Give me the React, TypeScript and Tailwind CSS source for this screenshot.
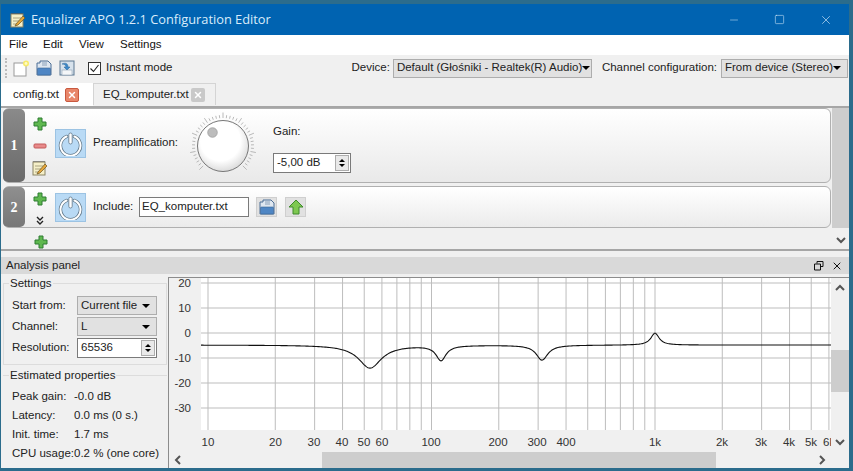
import { Minus, Square, X } from "lucide-react";

const font = "font-['Liberation_Sans',Arial,sans-serif]";

function Plus({ className = "" }: { className?: string }) {
  return (
    <svg width="14" height="14" viewBox="0 0 14 14" className={className}>
      <path d="M5 1h4v4h4v4H9v4H5V9H1V5h4z" fill="#5fb84f" stroke="#2f7d32" strokeWidth="1" />
    </svg>
  );
}

function MinusIcon() {
  return (
    <svg width="14" height="14" viewBox="0 0 14 14">
      <rect x="1" y="5" width="12" height="4" rx="1" fill="#e88a8a" stroke="#c25b5b" />
    </svg>
  );
}

function Notepad() {
  return (
    <svg width="16" height="16" viewBox="0 0 16 16">
      <rect x="1" y="2" width="12" height="13" fill="#f5efc8" stroke="#8a8464" />
      <path d="M2 2v-1M4 2v-1M6 2v-1M8 2v-1M10 2v-1M12 2v-1" stroke="#555" strokeWidth="1" />
      <path d="M3 6h8M3 9h6M3 12h4" stroke="#a9a380" />
      <path d="M6 12l7-8 2 2-7 7-3 1z" fill="#e6a73a" stroke="#6b5320" strokeWidth="0.7" />
    </svg>
  );
}

function Power() {
  return (
    <div className="w-[31px] h-[29px] shrink-0 bg-[#b9daf5] border border-[#9cc3e3] flex items-center justify-center">
      <svg width="25" height="25" viewBox="0 0 25 25" fill="none">
        <path d="M8.5 5.5a10 10 0 1 0 8 0" stroke="#5f7484" strokeWidth="3.4" strokeLinecap="round" />
        <path d="M8.5 5.5a10 10 0 1 0 8 0" stroke="#fff" strokeWidth="2" strokeLinecap="round" />
        <rect x="10.8" y="2" width="3.4" height="11" rx="1.7" fill="#fff" stroke="#5f7484" strokeWidth="0.8" />
      </svg>
    </div>
  );
}

function Floppy({ size = 16 }: { size?: number }) {
  return (
    <svg width={size} height={size} viewBox="0 0 16 16">
      <path d="M1 3h3V1h8l3 3v11H1z" fill="#dfe7f0" stroke="#4d6f96" />
      <rect x="1.5" y="8" width="13" height="7" rx="1" fill="#4f86c4" stroke="#3a6496" strokeWidth="0.6" />
      <path d="M6 3h5M6 5h5" stroke="#8aa0b8" />
    </svg>
  );
}

function SaveAs() {
  return (
    <svg width="16" height="16" viewBox="0 0 16 16">
      <rect x="1" y="1" width="14" height="14" fill="#d7e2ec" stroke="#5a7791" />
      <rect x="3" y="10" width="10" height="5" fill="#f4f6f8" stroke="#8fa3b5" strokeWidth="0.6" />
      <path d="M3 4c4-2 6 0 6 3h2l-3 3-3-3h2c0-2-2-3-4-3z" fill="#3d89c9" stroke="#2b6598" strokeWidth="0.5" />
    </svg>
  );
}

function NewDoc() {
  return (
    <svg width="17" height="17" viewBox="0 0 17 17">
      <rect x="1" y="3" width="12" height="13" fill="#fff" stroke="#9a9a9a" />
      <circle cx="13" cy="3.5" r="3" fill="#f7ea6a" />
      <circle cx="13" cy="3.5" r="1.4" fill="#fffbc4" />
    </svg>
  );
}

function Caret() {
  return <span className="w-0 h-0 border-x-[4px] border-x-transparent border-t-[4px] border-t-black shrink-0" />;
}

function Combo({ label, className = "" }: { label: string; className?: string }) {
  return (
    <div className={`h-[19px] bg-[#e1e1e1] border border-[#adadad] flex items-center justify-between pl-[3px] pr-[6px] ${className}`}>
      <span className="whitespace-nowrap">{label}</span>
      <Caret />
    </div>
  );
}

function Spin({ value, className = "" }: { value: string; className?: string }) {
  return (
    <div className={`h-[20px] bg-white border border-[#7a7a7a] flex items-center justify-between pl-[3px] pr-[1px] ${className}`}>
      <span>{value}</span>
      <div className="w-[14px] h-[16px] border border-[#adadad] bg-[#e9e9e9] flex flex-col items-center justify-center gap-[2px]">
        <span className="w-0 h-0 border-x-[3px] border-x-transparent border-b-[3px] border-b-black" />
        <span className="w-0 h-0 border-x-[3px] border-x-transparent border-t-[3px] border-t-black" />
      </div>
    </div>
  );
}

function Chevron({ dir }: { dir: "up" | "down" | "left" | "right" }) {
  const d = {
    up: "M2 8l4-4 4 4",
    down: "M2 4l4 4 4-4",
    left: "M8 2L4 6l4 4",
    right: "M4 2l4 4-4 4",
  }[dir];
  return (
    <svg width="12" height="12" viewBox="0 0 12 12" fill="none">
      <path d={d} stroke="#555" strokeWidth="2" />
    </svg>
  );
}

function Knob() {
  const ticks = Array.from({ length: 41 }, (_, i) => -225 + (i * 270) / 40);
  return (
    <svg width="68" height="68" viewBox="-34 -34 68 68" className="shrink-0">
      <defs>
        <radialGradient id="knob" cx="0.45" cy="0.4" r="0.65">
          <stop offset="0.6" stopColor="#ffffff" />
          <stop offset="1" stopColor="#d4d4d4" />
        </radialGradient>
      </defs>
      {ticks.map((a) => {
        const r = (a * Math.PI) / 180;
        const major = Math.round((a + 225) / 6.75) % 5 === 0;
        return (
          <line
            key={a}
            x1={Math.cos(r) * 28}
            y1={Math.sin(r) * 28}
            x2={Math.cos(r) * (major ? 33.5 : 31)}
            y2={Math.sin(r) * (major ? 33.5 : 31)}
            stroke="#a8a8a8"
            strokeWidth="0.8"
          />
        );
      })}
      <circle r="25.5" fill="url(#knob)" stroke="#777" strokeWidth="1" />
      <circle cx="-10.5" cy="-13.5" r="4.8" fill="#bcbcbc" stroke="#999" strokeWidth="0.7" />
    </svg>
  );
}

function Handle({ n, className = "" }: { n: number; className?: string }) {
  return (
    <div className={`w-[22px] shrink-0 rounded-[5px] flex items-center justify-center text-white font-bold text-[14px] font-['Liberation_Serif',serif] ${className}`}>
      {n}
    </div>
  );
}

const freqs = [10, 20, 30, 40, 50, 60, 70, 80, 90, 100, 200, 300, 400, 500, 600, 700, 800, 900, 1000, 2000, 3000, 4000, 5000, 6000];
const labels: [string, number][] = [
  ["10", 208], ["20", 275.5], ["30", 314], ["40", 342], ["50", 364], ["60", 382], ["100", 431],
  ["200", 498], ["300", 537], ["400", 566], ["1k", 655], ["2k", 722], ["3k", 761], ["4k", 789], ["5k", 811],
];
const gains = [20, 10, 0, -10, -20, -30];
const bands = [
  { c: 370, d: 23, w: 14 },
  { c: 441, d: 15, w: 6 },
  { c: 542, d: 15, w: 7 },
  { c: 655, d: -12, w: 5 },
];

function curvePath() {
  let p = "";
  for (let x = 201; x <= 831; x++) {
    let y = 345;
    for (const b of bands) y += b.d / (1 + ((x - b.c) / b.w) ** 2);
    p += `${p ? "L" : "M"}${x} ${y.toFixed(2)}`;
  }
  return p;
}

function Chart() {
  const xOf = (f: number) => 208 + 223.5 * Math.log10(f / 10);
  return (
    <svg width="662" height="174" viewBox="169 278 662 174" className="block shrink-0" fontFamily="'Liberation Sans',Arial,sans-serif" fontSize="11.5">
      <rect x="169" y="278" width="662" height="174" fill="#f0f0f0" />
      <rect x="201" y="278" width="630" height="152" fill="#fff" />
      {gains.map((g) => {
        const y = 333 - g * 2.5;
        return <line key={g} x1="201" x2="831" y1={y} y2={y} stroke="#bdbdbd" />;
      })}
      {freqs.map((f) => (
        <line key={f} x1={xOf(f)} x2={xOf(f)} y1="278" y2="430" stroke="#bdbdbd" />
      ))}
      <path d={curvePath()} fill="none" stroke="#111" strokeWidth="1.1" />
      {gains.map((g) => (
        <text key={g} x="191" y={333 - g * 2.5 + 4} textAnchor="end" fill="#333">{g}</text>
      ))}
      {labels.map(([t, x]) => (
        <text key={t} x={x} y="446" textAnchor="middle" fill="#333">{t}</text>
      ))}
      <text x="823" y="446" fill="#333">6k</text>
    </svg>
  );
}

export default function App() {
  return (
    <div className={`w-[853px] h-[471px] overflow-hidden bg-[#2b6c8c] pt-[4px] pl-[1px] pr-[4px] pb-[3px] flex flex-col text-[11.5px] text-[#222] ${font}`}>
      {/* title bar */}
      <div className="h-[31px] shrink-0 bg-[#0063b1] flex items-center pl-[9px] text-[#d9ecfa] text-[12.8px] font-['Open_Sans',sans-serif]">
        <Notepad />
        <span className="ml-[5px] flex-1">Equalizer APO 1.2.1 Configuration Editor</span>
        <div className="flex items-center gap-[34px] pr-[16px] text-[#d9ecfa]">
          <Minus size={12} strokeWidth={1} />
          <Square size={11} strokeWidth={1.2} />
          <X size={14} strokeWidth={1.1} />
        </div>
      </div>

      {/* menu */}
      <div className="h-[20px] shrink-0 bg-white flex items-center pl-[8px] text-[#111]">
        <span className="w-[34px]">File</span>
        <span className="w-[36px]">Edit</span>
        <span className="w-[41px]">View</span>
        <span>Settings</span>
      </div>

      {/* toolbar */}
      <div className="h-[26px] shrink-0 bg-[#f0f0f0] flex items-center pl-[4px]">
        <div className="w-[2px] h-[20px] border-l-2 border-dotted border-[#bbb]" />
        <div className="ml-[6px] flex items-center">
          <NewDoc />
          <span className="ml-[6px]"><Floppy /></span>
          <span className="ml-[7px]"><SaveAs /></span>
        </div>
        <div className="ml-[13px] w-[13px] h-[13px] bg-white border border-[#333] flex items-center justify-center">
          <svg width="11" height="11" viewBox="0 0 11 11" fill="none">
            <path d="M1.5 5.5l3 3 5-6.5" stroke="#222" strokeWidth="1.1" />
          </svg>
        </div>
        <span className="ml-[5px]">Instant mode</span>
        <span className="ml-auto">Device:</span>
        <Combo label="Default (Głośniki - Realtek(R) Audio)" className="ml-[3px] w-[199px]" />
        <span className="ml-[10px]">Channel configuration:</span>
        <Combo label="From device (Stereo)" className="ml-[4px] w-[127px] mr-[1px]" />
      </div>

      {/* tabs */}
      <div className="h-[25px] shrink-0 bg-[#f0f0f0] flex items-end">
        <div className="h-[23px] w-[92px] bg-white flex items-center pl-[12px]">
          <span className="w-[52px]">config.txt</span>
          <span className="w-[14px] h-[14px] rounded-[2px] bg-[#e8866a] border border-[#c9593f] flex items-center justify-center">
            <X size={10} strokeWidth={3.5} color="#fff" />
          </span>
        </div>
        <div className="h-[22px] w-[123px] mb-[1px] bg-[#f0f0f0] border border-b-0 border-[#d4d4d4] flex items-center pl-[9px]">
          <span className="w-[88px]">EQ_komputer.txt</span>
          <span className="w-[14px] h-[14px] rounded-[2px] bg-[#c9c9c9] flex items-center justify-center">
            <X size={10} strokeWidth={3.5} color="#fff" />
          </span>
        </div>
      </div>

      {/* filter rows */}
      <div className="h-[145px] shrink-0 bg-[#f0f0f0] border-t-2 border-b-2 border-[#a6a6a6] flex">
        <div className="flex-1 pl-[2px] pr-[1px] min-w-0">
          <div className="h-[75px] rounded-[6px] border border-[#b0b0b0] bg-gradient-to-b from-white to-[#e9e9e9] flex">
            <Handle n={1} className="bg-gradient-to-b from-[#8a8a8a] to-[#6a6a6a] -ml-px" />
            <div className="w-[30px] flex flex-col items-center justify-between pt-[8px] pb-[6px] shrink-0">
              <Plus />
              <MinusIcon />
              <Notepad />
            </div>
            <div className="self-center mt-[-5px]">
              <Power />
            </div>
            <span className="self-center ml-[7px] mt-[-5px] w-[92px]">Preamplification:</span>
            <div className="self-center ml-[4px]">
              <Knob />
            </div>
            <div className="ml-[16px] flex flex-col justify-between pt-[14px] pb-[9px]">
              <span>Gain:</span>
              <Spin value="-5,00 dB" className="w-[78px]" />
            </div>
          </div>
          <div className="mt-[3px] h-[42px] rounded-[6px] border border-[#b0b0b0] bg-gradient-to-b from-white to-[#ebebeb] flex">
            <Handle n={2} className="bg-gradient-to-b from-[#8f8f8f] to-[#777] -ml-px" />
            <div className="w-[30px] flex flex-col items-center justify-between pt-[5px] pb-[1px] shrink-0">
              <Plus />
              <svg width="10" height="10" viewBox="0 0 10 10" fill="none">
                <path d="M2 1l3 3 3-3M2 5l3 3 3-3" stroke="#222" strokeWidth="1.4" />
              </svg>
            </div>
            <div className="self-center">
              <Power />
            </div>
            <span className="self-center ml-[7px] w-[40px]">Include:</span>
            <div className="self-center ml-[6px] w-[110px] h-[20px] bg-white border border-[#7a7a7a] flex items-center pl-[2px]">EQ_komputer.txt</div>
            <div className="self-center ml-[7px] w-[21px] h-[20px] bg-[#e1e1e1] border border-[#cfcfcf] flex items-center justify-center">
              <Floppy />
            </div>
            <div className="self-center ml-[8px] w-[21px] h-[20px] bg-[#e1e1e1] border border-[#cfcfcf] flex items-center justify-center">
              <svg width="16" height="16" viewBox="0 0 16 16">
                <path d="M8 1l7 7h-4v7H5V8H1z" fill="#7ec850" stroke="#3f8a2c" />
              </svg>
            </div>
          </div>
          <div className="ml-[31px] mt-[7px]">
            <Plus />
          </div>
        </div>
        <div className="w-[17px] shrink-0 flex flex-col">
          <div className="h-[120px] bg-[#cdcdcd]" />
          <div className="flex-1 flex items-end justify-center pb-[3px]">
            <Chevron dir="down" />
          </div>
        </div>
      </div>

      <div className="h-[6px] shrink-0 bg-[#f0f0f0]" />

      {/* analysis panel */}
      <div className="h-[17px] shrink-0 bg-[#d9d9d9] flex items-center pl-[5px] pr-[6px]">
        <span className="flex-1">Analysis panel</span>
        <svg width="10" height="10" viewBox="0 0 10 10" fill="none" className="mr-[7px]">
          <path d="M3 2.5V.5h6v5H7M.5 3h6v6h-6z" stroke="#111" />
        </svg>
        <X size={12} strokeWidth={2} color="#111" />
      </div>
      <div className="h-[3px] shrink-0 bg-[#f0f0f0]" />

      <div className="flex-1 min-h-0 flex bg-[#f0f0f0]">
        <div className="w-[167px] shrink-0 pl-[2px] pr-[1px] flex flex-col">
          <div className="relative h-[82px] mt-[6px] border border-[#dcdcdc] pl-[8px] pr-[9px] pt-[12px] flex flex-col gap-[2px]">
            <span className="absolute left-[5px] -top-[9px] bg-[#f0f0f0] px-[1px]">Settings</span>
            <div className="flex items-center justify-between">
              <span>Start from:</span>
              <Combo label="Current file" className="w-[80px]" />
            </div>
            <div className="flex items-center justify-between">
              <span>Channel:</span>
              <Combo label="L" className="w-[80px]" />
            </div>
            <div className="flex items-center justify-between">
              <span>Resolution:</span>
              <Spin value="65536" className="w-[80px]" />
            </div>
          </div>
          <div className="relative flex-1 mt-[10px] border-t border-[#dcdcdc] pl-[9px] pt-[11px] flex flex-col">
            <span className="absolute left-[6px] -top-[9px] bg-[#f0f0f0] px-[1px]">Estimated properties</span>
            <div className="flex h-[19px] items-center"><span className="w-[62px]">Peak gain:</span><span>-0.0 dB</span></div>
            <div className="flex h-[19px] items-center"><span className="w-[62px]">Latency:</span><span>0.0 ms (0 s.)</span></div>
            <div className="flex h-[19px] items-center"><span className="w-[62px]">Init. time:</span><span>1.7 ms</span></div>
            <div className="flex h-[19px] items-center"><span className="w-[62px]">CPU usage:</span><span>0.2 % (one core)</span></div>
          </div>
        </div>

        {/* chart frame */}
        <div className="flex-1 min-w-0 border-l border-t border-[#8c8c8c] flex flex-col">
          <div className="flex h-[174px] shrink-0">
            <Chart />
            <div className="flex-1 flex flex-col items-center py-[4px]">
              <Chevron dir="up" />
              <div className="w-full h-[42px] mt-[56px] bg-[#cdcdcd]" />
              <div className="flex-1" />
              <Chevron dir="down" />
            </div>
          </div>
          <div className="flex-1 flex items-center">
            <div className="w-[20px] pl-[3px] shrink-0"><Chevron dir="left" /></div>
            <div className="ml-[133px] w-[394px] h-full bg-[#cdcdcd]" />
            <div className="ml-[100px]"><Chevron dir="right" /></div>
          </div>
        </div>
      </div>
    </div>
  );
}
